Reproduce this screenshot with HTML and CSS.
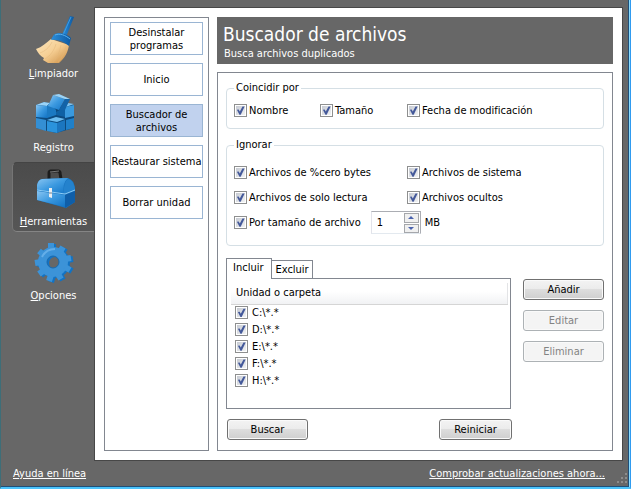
FILE: index.html
```
<!DOCTYPE html>
<html lang="es">
<head>
    <meta charset="UTF-8">
    <meta name="viewport" content="width=device-width, initial-scale=1.0">
    <title>Buscador de archivos</title>
    <link rel="stylesheet" href="styles.css">
</head>
<body>
    <div class="window">
        <nav class="sidebar">
            <button class="nav-item" type="button">
                <svg viewBox="0 0 48 48" aria-hidden="true">
                    <defs>
                        <linearGradient id="straw" x1="0" y1="0" x2="1" y2="1">
                            <stop offset="0" stop-color="#fbe6bd"/>
                            <stop offset="0.5" stop-color="#f6cf94"/>
                            <stop offset="1" stop-color="#c98a3e"/>
                        </linearGradient>
                        <linearGradient id="blue" x1="0" y1="0" x2="1" y2="1">
                            <stop offset="0" stop-color="#8ac6f2"/>
                            <stop offset="0.5" stop-color="#3b99e0"/>
                            <stop offset="1" stop-color="#1273c4"/>
                        </linearGradient>
                        <linearGradient id="blueDark" x1="0" y1="0" x2="1" y2="0">
                            <stop offset="0" stop-color="#2b8fdc"/>
                            <stop offset="1" stop-color="#0d58a0"/>
                        </linearGradient>
                    </defs>
                    <path d="M40 0L44 1L36 21L32 19Z" fill="url(#blueDark)"/>
                    <path d="M41 1L33 19" stroke="#3c9de4" stroke-width="1"/>
                    <path d="M21 23C16 27 12 31 6 33C8 37 10 40 14 42L13 44L18 47H29C35 42 38 36 39 29Z" fill="url(#straw)"/>
                    <path d="M22 26C19 32 15 35 10 37M26 28C24 35 20 40 15 43M31 29C30 36 27 42 23 46M36 30C35 36 32 42 28 46" fill="none" stroke="#e2b67a" stroke-width="0.5"/>
                    <path d="M25 18C30 15 39 19 41 22L39 30C33 25 27 23 21 24C22 22 23 19 25 18Z" fill="url(#blueDark)"/>
                    <path d="M25 19C30 17 35 19 40 23" fill="none" stroke="#57b1ef" stroke-width="1"/>
                </svg>
                <span><u>L</u>impiador</span>
            </button>
            <button class="nav-item" type="button">
                <svg viewBox="0 0 48 48" aria-hidden="true">
                    <path d="M6 15L14 12L24 14L34 16L38 14L44 15V38L26 43L6 38Z" fill="#0d4a7e"/>
                    <path d="M6 15L14 12L20 13L17 16Z" fill="#9ad3f7"/>
                    <path d="M6 15L17 16V28L6 27Z" fill="url(#blue)"/>
                    <path d="M17 16L20 13L26 20V25L17 28Z" fill="#1b79c2"/>
                    <path d="M26 22L35 17V27L26 25Z" fill="#0f61a4"/>
                    <path d="M34 17L38 13L44 14L36 17Z" fill="#7fc3ef"/>
                    <path d="M35 17L44 15V26L35 28Z" fill="#3a9ade"/>
                    <path d="M6 28L16 30V41L6 38Z" fill="#348fd4"/>
                    <path d="M36 30L44 28V38L36 40Z" fill="#1f80c9"/>
                    <path d="M17 30L26 27L35 29L27 32Z" fill="#6bbcef"/>
                    <path d="M17 31L27 33V43L17 41Z" fill="#2a93dc"/>
                    <path d="M27 33L35 30V40L27 43Z" fill="#1b76bf"/>
                    <path d="M18 16L23 5L35 9L29 20Z" fill="url(#blue)"/>
                    <path d="M23 5L29 4L40 9L35 9Z" fill="#9ad3f7"/>
                    <path d="M35 9L40 9L35 20L29 20Z" fill="#1263a8"/>
                </svg>
                <span>Re<u>g</u>istro</span>
            </button>
            <button class="nav-item selected" type="button">
                <svg viewBox="0 0 48 48" aria-hidden="true">
                    <path d="M19 16L19 9Q19 7 21 7L28 7Q30 7 30 9L31 15" fill="none" stroke="#1c1c1c" stroke-width="3"/>
                    <path d="M20 8L29 7" stroke="#777" stroke-width="1"/>
                    <path d="M7 22Q8 16 12 15L38 14Q44 16 45 24V38L36 44L7 36Z" fill="#1874c0"/>
                    <path d="M7 26V21Q8 16 12 15L38 14Q32 19 34 30Z" fill="url(#blue)"/>
                    <path d="M34 30Q33 18 38 15Q44 16 45 26L35 30Z" fill="#2482cd"/>
                    <path d="M7 27L35 31V43L7 36Z" fill="url(#blue)"/>
                    <path d="M35 31L45 27V38L35 44Z" fill="#0f5ea8"/>
                    <path d="M7 26L35 30L45 26" fill="none" stroke="#8bcbf5" stroke-width="1"/>
                    <path d="M19 24H22V34L19 33Z" fill="#e9eef2"/>
                    <path d="M19 29H22" stroke="#6f8292" stroke-width="1"/>
                </svg>
                <span><u>H</u>erramientas</span>
            </button>
            <button class="nav-item" type="button">
                <svg viewBox="0 0 48 48" aria-hidden="true">
                    <defs>
                        <g id="gear">
                            <circle cx="23" cy="24" r="10.5" fill="none" stroke-width="9"/>
                            <path stroke-width="6" d="M21 5v6M33 9l-3 5M41 20l-6 1M40 32l-5 -3M31 41l-3 -5M19 43l2 -6M9 36l4 -3M5 25l6 -1M9 13l5 4"/>
                        </g>
                    </defs>
                    <use href="#gear" x="2" y="1" stroke="#1273c4"/>
                    <use href="#gear" stroke="#3c93d8"/>
                    <circle cx="23" cy="24" r="6" fill="none" stroke="#1a69ac" stroke-width="1"/>
                    <path d="M12 19Q16 11 25 11" fill="none" stroke="#64aee8" stroke-width="2"/>
                </svg>
                <span><u>O</u>pciones</span>
            </button>
        </nav>

        <main class="panel">
            <div class="tool-list">
                <button type="button">Desinstalar programas</button>
                <button type="button">Inicio</button>
                <button type="button" class="active">Buscador de archivos</button>
                <button type="button">Restaurar sistema</button>
                <button type="button">Borrar unidad</button>
            </div>

            <div class="tool">
                <header class="tool-header">
                    <h1>Buscador de archivos</h1>
                    <p>Busca archivos duplicados</p>
                </header>

                <form class="tool-body">
                    <fieldset class="match">
                        <legend>Coincidir por</legend>
                        <div class="options">
                            <label><input type="checkbox" checked>Nombre</label>
                            <label><input type="checkbox" checked>Tamaño</label>
                            <label><input type="checkbox" checked>Fecha de modificación</label>
                        </div>
                    </fieldset>

                    <fieldset class="ignore">
                        <legend>Ignorar</legend>
                        <div class="options">
                            <label class="wide"><input type="checkbox" checked>Archivos de %cero bytes</label>
                            <label><input type="checkbox" checked>Archivos de sistema</label>
                            <label class="wide"><input type="checkbox" checked>Archivos de solo lectura</label>
                            <label><input type="checkbox" checked>Archivos ocultos</label>
                            <div class="size-row">
                                <label><input type="checkbox" checked>Por tamaño de archivo</label>
                                <div class="spinner">
                                    <input type="text" id="size" value="1" aria-label="Tamaño de archivo">
                                    <div class="arrows">
                                        <button type="button" class="up" aria-label="Más"></button>
                                        <button type="button" class="down" aria-label="Menos"></button>
                                    </div>
                                </div>
                                <label for="size">MB</label>
                            </div>
                        </div>
                    </fieldset>

                    <div class="folders">
                        <div class="tabs-box">
                            <div class="tabs">
                                <button type="button" class="tab current">Incluir</button>
                                <button type="button" class="tab">Excluir</button>
                            </div>
                            <div class="tab-page">
                                <table>
                                    <thead>
                                        <tr><th>Unidad o carpeta</th></tr>
                                    </thead>
                                    <tbody>
                                        <tr><td><label><input type="checkbox" checked>C:\*.*</label></td></tr>
                                        <tr><td><label><input type="checkbox" checked>D:\*.*</label></td></tr>
                                        <tr><td><label><input type="checkbox" checked>E:\*.*</label></td></tr>
                                        <tr><td><label><input type="checkbox" checked>F:\*.*</label></td></tr>
                                        <tr><td><label><input type="checkbox" checked>H:\*.*</label></td></tr>
                                    </tbody>
                                </table>
                            </div>
                            <div class="actions">
                                <button type="button" class="btn">Buscar</button>
                                <button type="button" class="btn reset">Reiniciar</button>
                            </div>
                        </div>
                        <div class="side-buttons">
                            <button type="button" class="btn">Añadir</button>
                            <button type="button" class="btn" disabled>Editar</button>
                            <button type="button" class="btn" disabled>Eliminar</button>
                        </div>
                    </div>
                </form>
            </div>
        </main>

        <footer class="status">
            <a href="#">Ayuda en línea</a>
            <a href="#">Comprobar actualizaciones ahora...</a>
            <svg class="grip" viewBox="0 0 12 12" aria-hidden="true">
                <path d="M9 1h2M5 5h2M9 5h2M1 9h2M5 9h2M9 9h2" stroke="#8c8c8c" stroke-width="2"/>
            </svg>
        </footer>
    </div>
</body>
</html>
```
FILE: styles.css
```
* {
    box-sizing: border-box;
}
body {
    margin: 0;
    font-family: "DejaVu Sans Condensed", "DejaVu Sans", sans-serif;
    font-stretch: condensed;
    font-size: 11px;
    line-height: 14px;
    color: #000;
    background-color: #676767;
}
button,
input {
    font: inherit;
    color: inherit;
    margin: 0;
    padding: 0;
}
.window {
    display: grid;
    grid-template-columns: 93px 1fr;
    grid-template-rows: 1fr 26px;
    min-height: 100vh;
    padding: 7px 7px 0 0;
    border-left: 1px solid #3d6e78;
    border-right: 1px solid #2f9bf0;
    border-bottom: 2px solid #4cc4fb;
    box-shadow: inset -1px 0 #8adcff, inset -2px -1px #1f4f78;
}

/* left icon bar */
.sidebar {
    display: flex;
    flex-direction: column;
    gap: 4px;
    padding: 7px 0 0 11px;
}
.nav-item {
    display: flex;
    flex-direction: column;
    align-items: center;
    gap: 3px;
    height: 70px;
    padding-top: 1px;
    border: 1px solid transparent;
    border-right: 0;
    border-radius: 5px 0 0 5px;
    background: none;
    color: #fff;
}
.nav-item svg {
    width: 48px;
    height: 48px;
}
.nav-item.selected {
    border-color: #444 #444 #858585 #757575;
    background: linear-gradient(#4b4b4b, #565656);
}

/* white area */
.panel {
    display: flex;
    gap: 8px;
    padding: 9px;
    border: 1px solid #474747;
    background-color: #fff;
}
.tool-list {
    display: flex;
    flex-direction: column;
    gap: 8px;
    width: 105px;
    padding: 4px 5px;
    border: 1px solid #828790;
}
.tool-list button {
    height: 33px;
    border: 1px solid #9ab5d3;
    background-color: #fff;
    line-height: 13px;
}
.tool-list .active {
    background-color: #c1d2ee;
}
.tool {
    flex: 1;
    display: flex;
    flex-direction: column;
    gap: 8px;
}
.tool-header {
    height: 47px;
    padding: 4px 6px;
    background-color: #676767;
    color: #fff;
}
.tool-header h1 {
    margin: 0;
    font-size: 19px;
    font-weight: normal;
    line-height: 26px;
}
.tool-header p {
    margin: 0;
    padding-left: 1px;
}
.tool-body {
    flex: 1;
    padding: 8px;
    border: 1px solid #828790;
}

/* option groups */
fieldset {
    min-width: 0;
    margin: 0;
    border: 1px solid #d5dfe5;
    border-radius: 4px;
}
legend {
    padding: 0 2px;
}
.match {
    padding: 3px 7px 5px;
}
.ignore {
    margin-top: 9px;
    padding: 8px 7px 10px;
}
.options {
    display: grid;
    grid-template-columns: 86px 87px 1fr;
    grid-auto-rows: 25px;
    align-items: center;
}
.options .wide {
    grid-column: span 2;
}
label {
    display: flex;
    align-items: center;
    white-space: nowrap;
}
input[type="checkbox"] {
    appearance: none;
    flex: none;
    position: relative;
    width: 13px;
    height: 13px;
    margin-right: 2px;
    border: 1px solid #8e8f8f;
    background: linear-gradient(135deg, #c6cad2, #f2f3f4) content-box;
    padding: 1px;
}
input[type="checkbox"]:checked::after {
    content: "";
    position: absolute;
    inset: 1px;
    background-color: #44599a;
    clip-path: polygon(10% 42%, 30% 38%, 42% 60%, 72% 5%, 96% 5%, 52% 96%, 38% 96%);
}
.size-row {
    grid-column: 1 / -1;
    display: flex;
    align-items: center;
}
.spinner {
    display: flex;
    width: 50px;
    height: 23px;
    margin: 0 4px 0 10px;
    border: 1px solid #abadb3;
    border-color: #abadb3 #abadb3 #e3e9ef #e2e3ea;
}
.spinner input {
    flex: 1;
    min-width: 0;
    padding-left: 5px;
    border: 0;
    outline: 0;
    background: none;
}
.arrows {
    display: flex;
    flex-direction: column;
    gap: 1px;
    width: 16px;
    padding: 1px 1px 0 0;
}
.arrows button {
    display: flex;
    flex: 1;
    align-items: center;
    justify-content: center;
    border: 1px solid #a5a7ab;
    background-color: #f0f0f0;
}
.arrows button::before {
    content: "";
    border: 3px solid transparent;
}
.arrows .up::before {
    border-top: 0;
    border-bottom-color: #4a62ad;
}
.arrows .down::before {
    border-bottom: 0;
    border-top-color: #4a62ad;
}

/* folder list */
.folders {
    display: flex;
    gap: 12px;
    margin-top: 12px;
}
.tabs-box {
    flex: 1;
}
.tabs {
    display: flex;
    align-items: flex-end;
    height: 20px;
}
.tab {
    height: 18px;
    padding: 0 3px;
    border: 1px solid #828790;
    border-width: 1px 1px 0 0;
    background-color: #fff;
}
.tab.current {
    height: 21px;
    margin-bottom: -1px;
    padding: 0 8px 2px 6px;
    border-width: 1px 1px 0 1px;
    z-index: 1;
}
.tab-page {
    height: 131px;
    padding: 4px 2px 4px 4px;
    border: 1px solid #828790;
}
table {
    width: 100%;
    border-collapse: collapse;
}
th {
    height: 21px;
    padding: 0 5px;
    border-right: 1px solid #e3e4e6;
    border-bottom: 1px solid #d5d5d5;
    background: linear-gradient(#fff 40%, #f1f2f4);
    font-weight: normal;
    text-align: left;
}
td {
    height: 17px;
    padding: 0 4px;
}
td input[type="checkbox"] {
    margin-right: 4px;
}
.btn {
    width: 81px;
    height: 21px;
    border: 1px solid #707070;
    border-radius: 3px;
    background: linear-gradient(#f3f3f3, #ebebeb 50%, #dddddd 50%, #cfcfcf);
    box-shadow: inset 0 0 0 1px #fafafa;
}
.btn:disabled {
    border-color: #adb2b5;
    background: #f4f4f4;
    color: #838383;
}
.btn.reset {
    width: 73px;
}
.actions {
    display: flex;
    justify-content: space-between;
    margin: 10px -1px 0 1px;
}
.side-buttons {
    display: flex;
    flex-direction: column;
    gap: 10px;
    padding-top: 21px;
}

/* bottom bar */
.status {
    grid-column: 1 / -1;
    display: flex;
    align-items: center;
    justify-content: space-between;
    padding-left: 12px;
}
.status a {
    color: #fff;
}
.status a:nth-child(2) {
    margin-left: auto;
}
.grip {
    align-self: flex-end;
    width: 12px;
    height: 12px;
    margin: 0 -5px 2px 11px;
}
```
